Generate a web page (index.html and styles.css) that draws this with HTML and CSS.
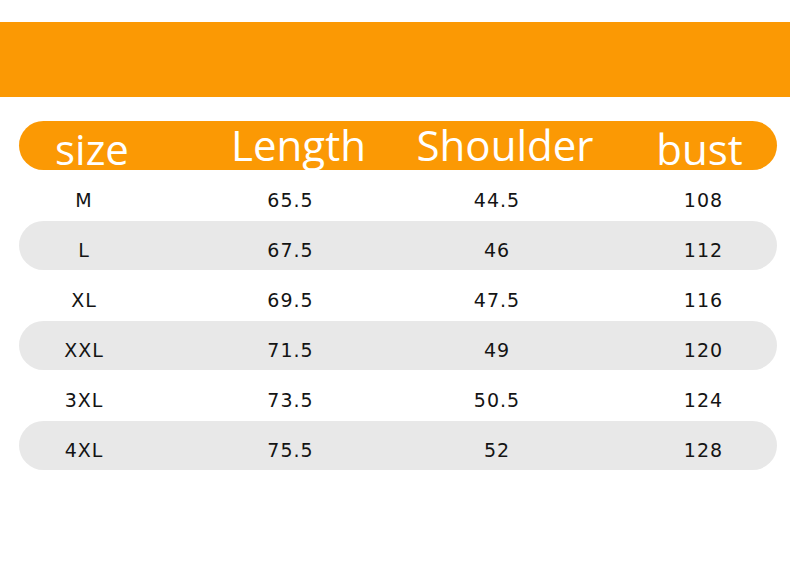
FILE: index.html
```html
<!DOCTYPE html>
<html>
<head>
<meta charset="utf-8">
<title>Size chart</title>
<link rel="stylesheet" href="styles.css">
</head>
<body>
<div class="banner"></div>
<div class="chart">
  <div class="head">
    <div class="hcell low">size</div>
    <div class="hcell">Length</div>
    <div class="hcell">Shoulder</div>
    <div class="hcell low last">bust</div>
  </div>
  <div class="rows">
    <div class="row"><div class="cell">M</div><div class="cell">65.5</div><div class="cell">44.5</div><div class="cell">108</div></div>
    <div class="row alt"><div class="cell">L</div><div class="cell">67.5</div><div class="cell">46</div><div class="cell">112</div></div>
    <div class="row"><div class="cell">XL</div><div class="cell">69.5</div><div class="cell">47.5</div><div class="cell">116</div></div>
    <div class="row alt"><div class="cell">XXL</div><div class="cell">71.5</div><div class="cell">49</div><div class="cell">120</div></div>
    <div class="row"><div class="cell">3XL</div><div class="cell">73.5</div><div class="cell">50.5</div><div class="cell">124</div></div>
    <div class="row alt"><div class="cell">4XL</div><div class="cell">75.5</div><div class="cell">52</div><div class="cell">128</div></div>
  </div>
</div>
</body>
</html>
```
FILE: styles.css
```css
html, body {
  margin: 0;
  padding: 0;
  background: #ffffff;
  overflow: hidden;
}

body {
  font-family: "DejaVu Sans", "Noto Sans", sans-serif;
  color: #141414;
}

.banner {
  margin-top: 22px;
  height: 75px;
  background: #fb9904;
}

.chart {
  margin: 24px 13px 0 19px;
}

.head {
  height: 49px;
  box-sizing: border-box;
  border-radius: 25px;
  background: #fb9904;
  display: grid;
  grid-template-columns: repeat(4, 110px);
  column-gap: 96.5px;
  padding: 3px 0 0 18px;
}

.hcell {
  display: flex;
  justify-content: center;
  font-family: "Open Sans", "Liberation Sans", sans-serif;
  font-size: 42px;
  line-height: 42px;
  color: #ffffff;
  white-space: nowrap;
}

.hcell.low {
  padding-top: 4px;
}

.hcell.last {
  margin-right: 12px;
  margin-left: -12px;
}

.rows {
  padding-top: 1px;
}

.row {
  height: 49px;
  margin-bottom: 1px;
  box-sizing: border-box;
  border-radius: 25px;
  display: grid;
  grid-template-columns: repeat(4, 110px);
  column-gap: 96.5px;
  padding: 18px 0 0 10px;
}

.row.alt {
  background: #e8e8e8;
}

.cell {
  display: flex;
  justify-content: center;
  font-size: 19px;
  line-height: 22px;
  letter-spacing: 1px;
  white-space: nowrap;
}
```
